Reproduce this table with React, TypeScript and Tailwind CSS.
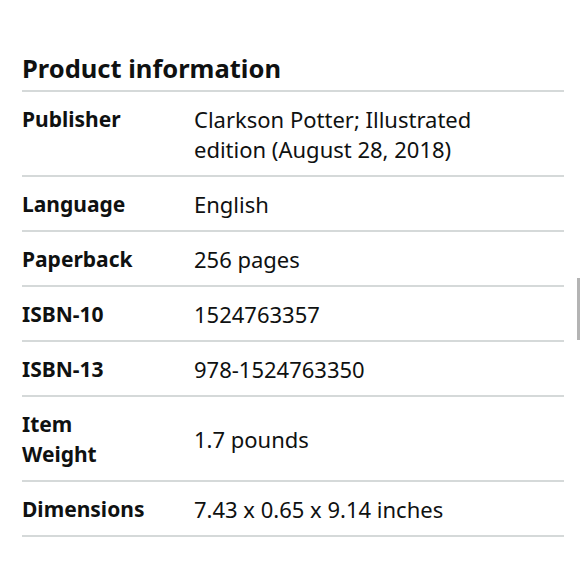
import React from "react";

type Row = { label: string; value: string };

const rows: Row[] = [
  { label: "Publisher", value: "Clarkson Potter; Illustrated edition (August 28, 2018)" },
  { label: "Language", value: "English" },
  { label: "Paperback", value: "256 pages" },
  { label: "ISBN-10", value: "1524763357" },
  { label: "ISBN-13", value: "978-1524763350" },
  { label: "Item\nWeight", value: "1.7 pounds" },
  { label: "Dimensions", value: "7.43 x 0.65 x 9.14 inches" },
];

export default function App() {
  return (
    <div className="relative w-[580px] h-[580px] bg-white text-[#0f1111] font-['Noto_Sans',sans-serif] overflow-hidden">
      <div className="pt-[51px] pl-[22px] pr-[16px]">
        <h2 className="text-[25.5px] leading-[34px] font-bold pb-[5px]">Product information</h2>

        <div className="border-t-2 border-[#d5d9d9]">
          {rows.map((r) => (
            <div
              key={r.label}
              className="grid grid-cols-[172px_1fr] items-center border-b-2 border-[#d5d9d9] py-[11.5px]"
            >
              <div className="self-start whitespace-pre-line text-[21px] leading-[30px] font-bold">
                {r.label}
              </div>
              <div className="pr-[50px] text-[22px] leading-[30px]">{r.value}</div>
            </div>
          ))}
        </div>
      </div>

      {/* scrollbar sliver */}
      <div className="absolute right-0 top-[278px] w-[3px] h-[62px] bg-[#b4b4b4]" />
    </div>
  );
}
